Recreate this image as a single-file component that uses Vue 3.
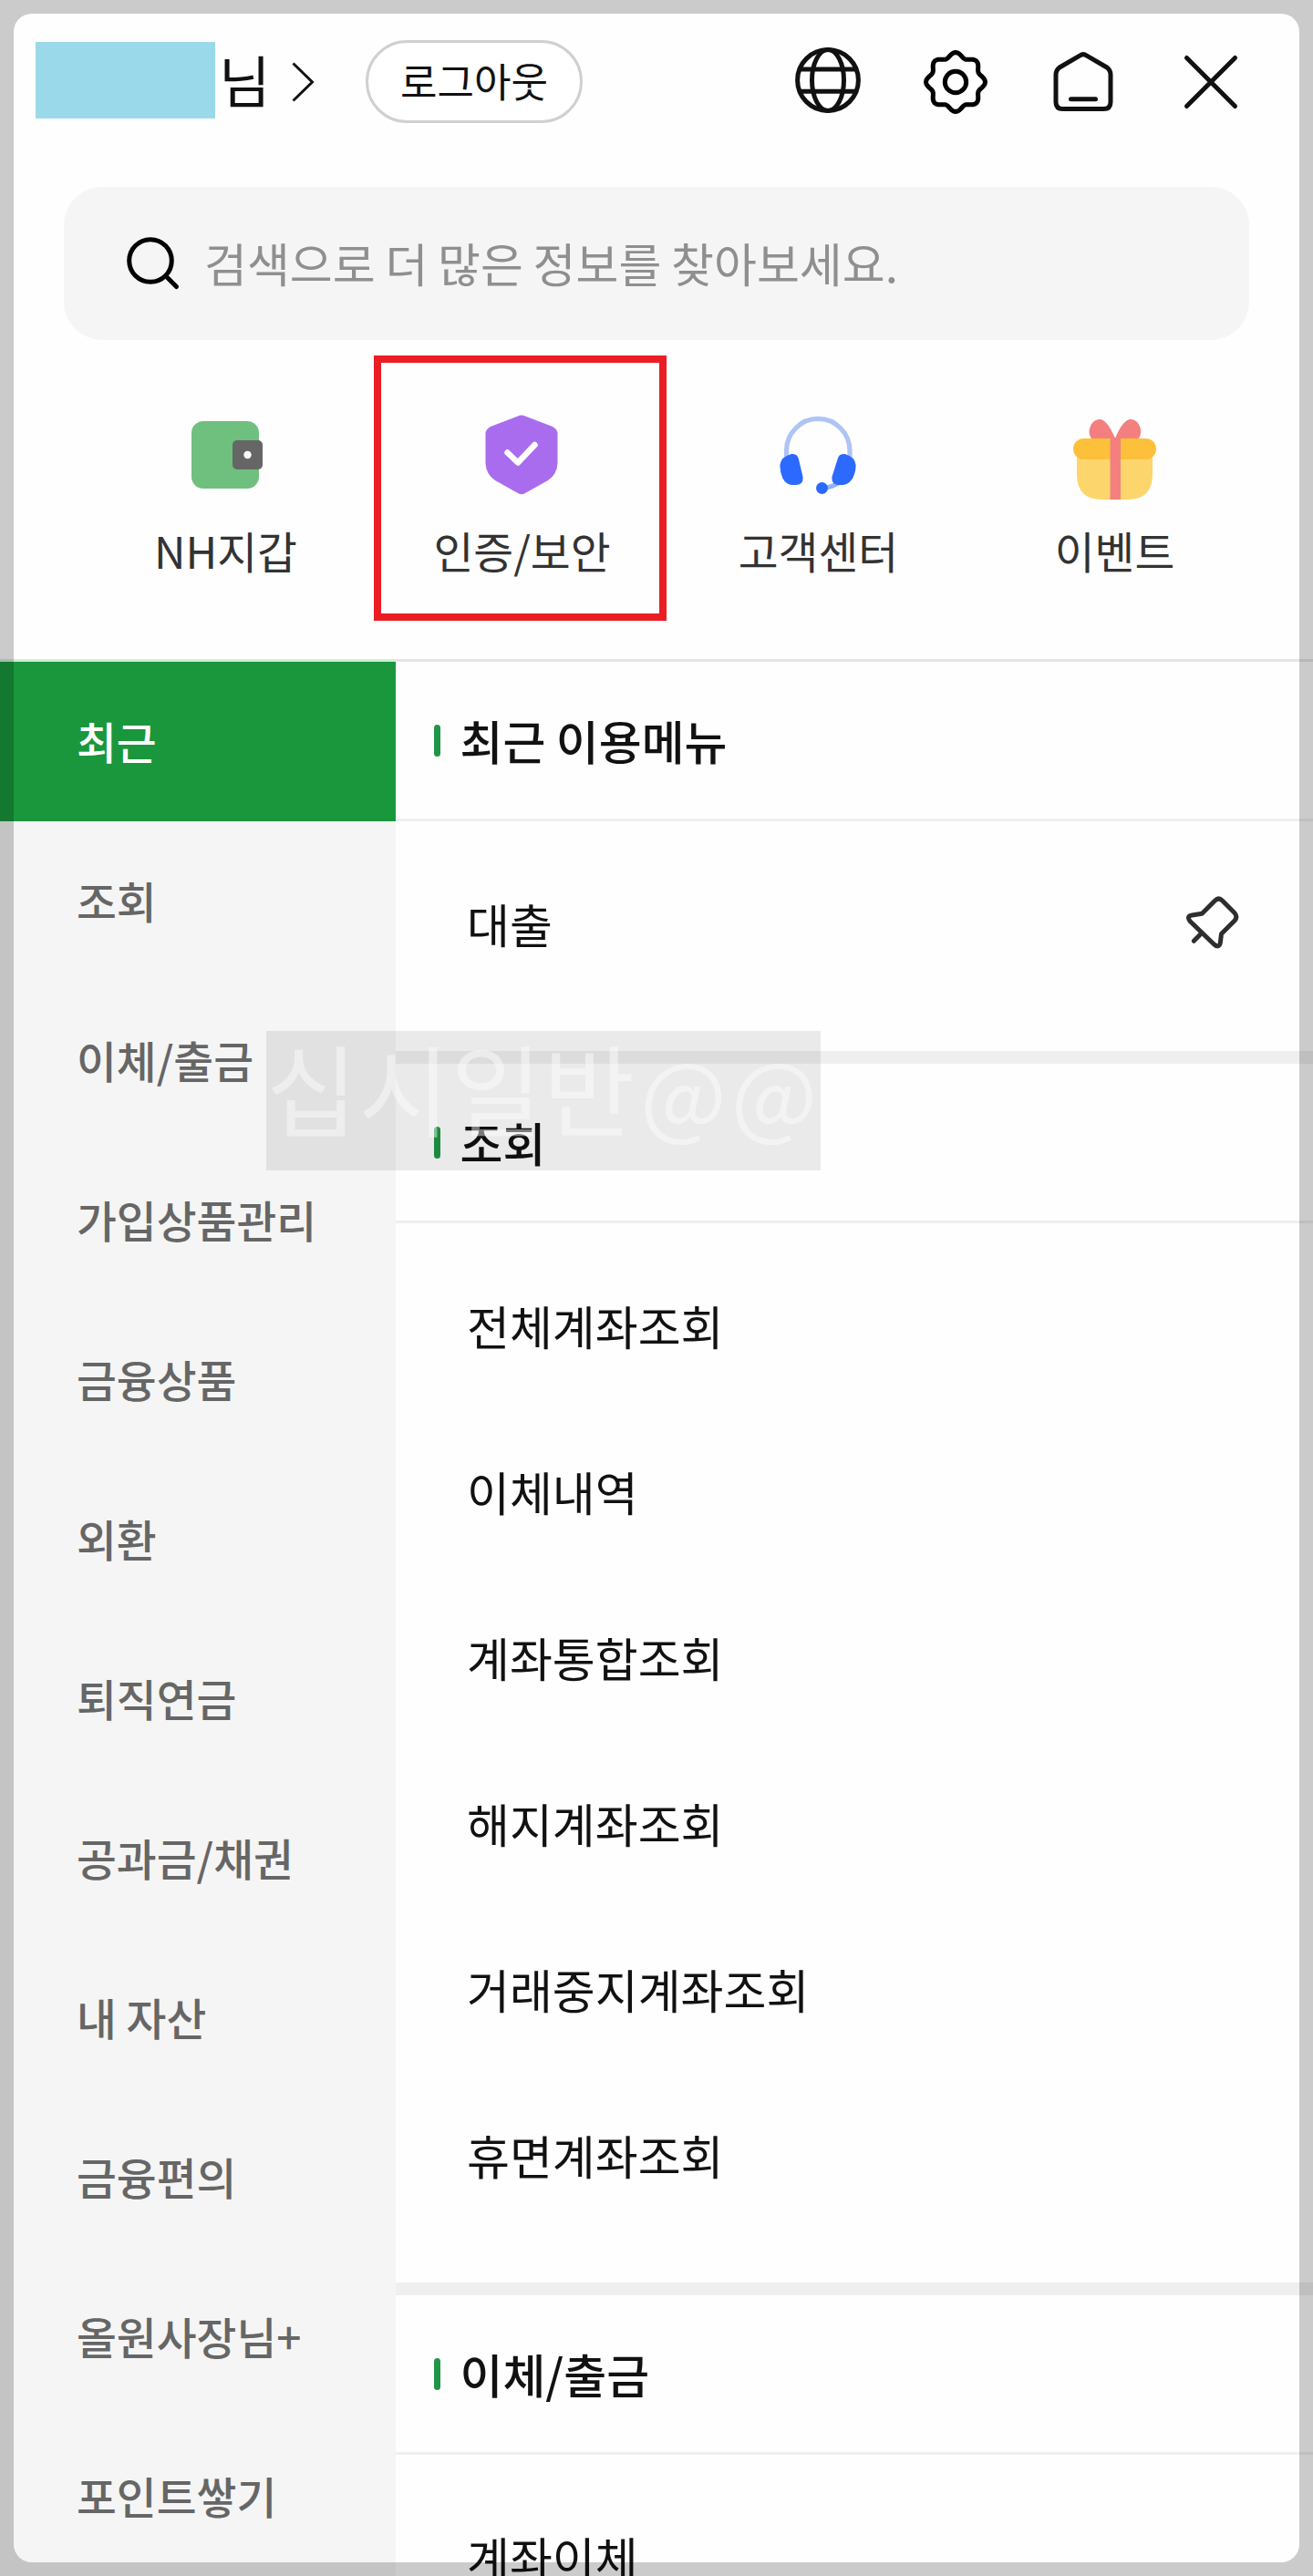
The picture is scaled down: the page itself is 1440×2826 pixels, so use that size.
<script setup>
const quickMenus = [
  { id: 'wallet', label: 'NH지갑' },
  { id: 'security', label: '인증/보안', marked: true },
  { id: 'support', label: '고객센터' },
  { id: 'event', label: '이벤트' },
]

const categories = [
  '최근', '조회', '이체/출금', '가입상품관리', '금융상품', '외환',
  '퇴직연금', '공과금/채권', '내 자산', '금융편의', '올원사장님+', '포인트쌓기',
]

const sections = [
  { title: '최근 이용메뉴', items: ['대출'], pinnable: true },
  {
    title: '조회',
    items: ['전체계좌조회', '이체내역', '계좌통합조회', '해지계좌조회', '거래중지계좌조회', '휴면계좌조회'],
  },
  { title: '이체/출금', items: ['계좌이체'] },
]

// Eight-lobed outline of the settings gear
const gearPath = Array.from({ length: 96 }, (_, i) => {
  const a = (i / 96) * Math.PI * 2
  const r = 29.8 + 2.7 * Math.cos(8 * a)
  return `${i ? 'L' : 'M'}${(r * Math.cos(a)).toFixed(2)} ${(r * Math.sin(a)).toFixed(2)}`
}).join('') + 'Z'
</script>

<template>
  <div class="screen">
    <header class="header">
      <div class="name-mask"></div>
      <span class="suffix">님</span>
      <svg class="chevron" width="26" height="46" viewBox="0 0 26 46">
        <path d="M2.5 2.5 23.5 23 2.5 43.5" fill="none" stroke="#111" stroke-width="3" />
      </svg>
      <button class="logout">로그아웃</button>
      <nav class="tools">
        <svg class="tool" viewBox="-40 -38 80 80">
          <g fill="none" stroke="#111" stroke-width="5">
            <circle r="33.4" />
            <ellipse rx="17.5" ry="33.4" />
            <path d="M-31-12H31M-31 12.3H31" />
          </g>
        </svg>
        <svg class="tool" viewBox="-40 -40 80 80">
          <g fill="none" stroke="#000" stroke-width="5" stroke-linejoin="round">
            <path :d="gearPath" />
            <circle r="11.7" />
          </g>
        </svg>
        <svg class="tool" viewBox="-40 -40 80 80">
          <g fill="none" stroke="#111" stroke-width="5" stroke-linecap="round" stroke-linejoin="round">
            <path d="M-3.5-29.2Q0-31.5 3.5-29.2L26-16Q30-13 30-8V22Q30 29.5 22.5 29.5H-22.5Q-30 29.5-30 22V-8Q-30-13-26-16Z" />
            <path d="M-13.5 18.7H13.5" />
          </g>
        </svg>
        <svg class="tool" viewBox="-40 -40 80 80">
          <path d="M-26.5-26.5 26.5 26.5M26.5-26.5-26.5 26.5" fill="none" stroke="#111" stroke-width="5" stroke-linecap="round" />
        </svg>
      </nav>
    </header>

    <div class="search">
      <svg class="search-icon" width="64" height="64" viewBox="0 0 64 64">
        <g fill="none" stroke="#000" stroke-width="5" stroke-linecap="round">
          <circle cx="30" cy="29" r="23.3" />
          <path d="M47 46 58.5 57.5" />
        </g>
      </svg>
      <span class="placeholder">검색으로 더 많은 정보를 찾아보세요.</span>
    </div>

    <div class="quick">
      <div v-for="q in quickMenus" :key="q.id" class="quick-item">
        <svg class="quick-icon" viewBox="-49 -50 100 100">
          <g v-if="q.id === 'wallet'">
            <rect x="-37" y="-38" width="74" height="74" rx="13" fill="#6fbf7f" />
            <rect x="8" y="-17" width="33" height="32" rx="5" fill="#666" />
            <circle cx="24.500" cy="-1" r="4.2" fill="#fff" />
          </g>
          <g v-else-if="q.id === 'security'">
            <path d="M-4-43.6Q0-45.6 4-43.6L34-32Q39.500-29 39.500-24V7Q39.500 20 29 27L4 41Q0 43.500-4 41L-29 27Q-39.500 20-39.500 7V-24Q-39.500-29-34-32Z" fill="#a96cee" />
            <path d="M-15.500-3.500-4 7.500 14.500-12" fill="none" stroke="#fff" stroke-width="6.500" stroke-linecap="round" stroke-linejoin="round" />
          </g>
          <g v-else-if="q.id === 'support'">
            <path d="M-34.500 3V-5.500A34.700 35 0 0 1 35 -5.500V3" fill="none" stroke="#aec4f5" stroke-width="5.200" />
            <path d="M24 29Q17 34 6 35.500" fill="none" stroke="#8fb3fa" stroke-width="5" />
            <path d="M-29-2Q-22.500-3-21 4L-16.500 23Q-15.500 32-24 32H-29Q-35 31-38.500 25Q-42 17-41.500 10Q-40.500 1-29-2Z" fill="#2b69ff" />
            <path d="M29.500-2Q23-3 21.500 4L15.500 23Q14.500 32 23 32H28Q34 31 38 25Q42 17 41.500 10Q40.500 1 29.500-2Z" fill="#2b69ff" />
            <circle cx="4.500" cy="35.500" r="6.500" fill="#2b69ff" />
          </g>
          <g v-else>
            <path d="M-41 2H42V20Q42 48 15 48H-14Q-41 48-41 20Z" fill="#fcd56c" />
            <path d="M1-19C-5-34-11-40-16-40C-26-40-31-25-24-18H1ZM1-19C7-34 13-40 18-40C28-40 33-25 26-18H1Z" fill="#f3807f" />
            <rect x="-45" y="-19" width="91" height="23" rx="11.500" fill="#fcc03b" />
            <path d="M-4.500-20H7V48H-4.500Z" fill="#f3807f" />
          </g>
        </svg>
        <span class="quick-label">{{ q.label }}</span>
        <i v-if="q.marked" class="mark"></i>
      </div>
    </div>

    <div class="rule"></div>

    <main class="body">
      <nav class="tabs">
        <div v-for="(c, i) in categories" :key="c" class="tab" :class="{ active: i === 0 }">{{ c }}</div>
      </nav>
      <div class="content">
        <section v-for="s in sections" :key="s.title" class="section">
          <h2 class="title">{{ s.title }}</h2>
          <ul class="list">
            <li v-for="item in s.items" :key="item" class="item">
              <span>{{ item }}</span>
              <svg v-if="s.pinnable" width="60" height="60" viewBox="0 3 60 60" overflow="visible">
                <g fill="none" stroke="#2e2e2e" stroke-width="5" stroke-linecap="round" stroke-linejoin="round">
                  <path d="M32.500 8Q36.500 4 40.500 8L53.500 21Q58 25.500 54 30L39.500 44.500 38.500 53Q37.500 61 31.500 56L5 30.500Q1 25 7.500 24L18.300 22.300Z" />
                  <path d="M9.300 52.300 18 43.600" />
                </g>
              </svg>
            </li>
          </ul>
        </section>
      </div>
    </main>

    <div class="watermark">십시일반<span class="at">@@</span></div>
    <div class="frame"></div>
  </div>
</template>

<style>
body {
  margin: 0;
}
</style>

<style scoped>
.screen {
  position: relative;
  width: 1440px;
  height: 2826px;
  overflow: hidden;
  background: #fefefe;
  color: #111;
  font-family: "Noto Sans CJK KR", "Noto Sans", sans-serif;
}
.header {
  display: flex;
  align-items: center;
  height: 91px;
  padding: 44px 72px 0 39px;
}
.name-mask {
  width: 197px;
  height: 84px;
  margin-top: -3px;
  background: #9ad9e9;
}
.suffix {
  width: 79px;
  margin: -5px 0 0 4px;
  font-size: 61.5px;
  line-height: 80px;
}
.logout {
  box-sizing: border-box;
  width: 238px;
  height: 91px;
  margin-left: 56px;
  padding: 0 0 4px;
  border: 3px solid #d0d0d0;
  border-radius: 46px;
  background: #fff;
  color: #111;
  font: 400 44px/60px "Noto Sans CJK KR", sans-serif;
}
.tools {
  display: flex;
  gap: 60px;
  margin-left: auto;
}
.tool {
  width: 80px;
  height: 80px;
}
.search {
  display: flex;
  align-items: center;
  box-sizing: border-box;
  width: 1300px;
  height: 168px;
  margin: 70px 0 0 70px;
  padding-left: 65px;
  border-radius: 42px;
  background: #f5f5f5;
}
.placeholder {
  margin: -2px 0 0 25px;
  color: #8f8f8f;
  font-size: 51px;
  word-spacing: -0.7px;
  white-space: nowrap;
}
.quick {
  display: flex;
  width: 1300px;
  height: 350px;
  margin-left: 85px;
}
.quick-item {
  position: relative;
  display: flex;
  flex: 1;
  flex-direction: column;
  align-items: center;
  padding-top: 77px;
}
.quick-icon {
  width: 100px;
  height: 100px;
}
.quick-label {
  margin-top: 19px;
  color: #333;
  font-size: 47.7px;
  line-height: 70px;
}
.mark {
  position: absolute;
  top: 17px;
  left: 0;
  box-sizing: border-box;
  width: 321px;
  height: 291px;
  border: 8px solid #ea1d25;
}
.rule {
  height: 3px;
  background: linear-gradient(90deg, #cdeed5 434px, #e5e5e5 434px);
}
.body {
  display: flex;
  height: 2100px;
}
.tabs {
  width: 434px;
  background: #f5f5f5;
}
.tab {
  height: 175px;
  padding-left: 84px;
  color: #666;
  font-size: 47.7px;
  font-weight: 500;
  line-height: 174px;
}
.tab.active {
  background: #1a973c;
  color: #fff;
}
.content {
  flex: 1;
}
.section + .section {
  border-top: 14px solid #efefef;
}
.title {
  display: flex;
  align-items: center;
  height: 172px;
  margin: 0;
  padding-left: 42px;
  border-bottom: 3px solid #efefef;
  font-size: 51px;
  font-weight: 500;
}
.title::before {
  content: "";
  width: 7px;
  height: 35px;
  margin-right: 21.5px;
  border-radius: 4px;
  background: #209647;
}
.list {
  margin: 0;
  padding: 21px 80px 49px 78px;
  list-style: none;
}
.item {
  display: flex;
  align-items: center;
  justify-content: space-between;
  height: 182px;
  font-size: 51px;
}
.watermark {
  position: absolute;
  top: 1131px;
  left: 292px;
  box-sizing: border-box;
  width: 608px;
  height: 153px;
  background: rgba(0, 0, 0, 0.08);
  color: rgba(255, 255, 255, 0.45);
  font-size: 109px;
  font-weight: 400;
  letter-spacing: 1px;
  line-height: 122px;
  white-space: nowrap;
}
.at {
  margin-left: 5px;
  font-size: 100px;
  letter-spacing: 5px;
  line-height: 1;
}
.frame {
  position: absolute;
  inset: 15px;
  border-radius: 20px;
  box-shadow: 0 0 0 30px rgba(0, 0, 0, 0.2);
  pointer-events: none;
}
</style>
